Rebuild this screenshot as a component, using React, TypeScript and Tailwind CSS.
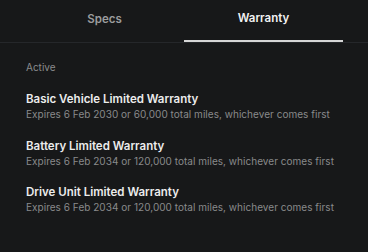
import React from "react";

const items = [
  { title: "Basic Vehicle Limited Warranty", sub: "Expires 6 Feb 2030 or 60,000 total miles, whichever comes first" },
  { title: "Battery Limited Warranty", sub: "Expires 6 Feb 2034 or 120,000 total miles, whichever comes first" },
  { title: "Drive Unit Limited Warranty", sub: "Expires 6 Feb 2034 or 120,000 total miles, whichever comes first" },
];

export default function App() {
  return (
    <div className="w-[368px] h-[252px] bg-[#171819] overflow-hidden" style={{ fontFamily: "Inter, 'Noto Sans', sans-serif" }}>
      <div className="border-b border-[#25272a]">
        <div className="flex px-[25px]">
          <div className="flex-1 h-[42px] pb-[2px] flex items-center justify-center text-[11.5px] text-[#9b9c9d] font-semibold">Specs</div>
          <div className="flex-1 h-[42px] pb-[2px] flex items-center justify-center text-[11.5px] text-[#f2f2f2] font-semibold border-b-2 border-[#d6d6d6] -mb-px">Warranty</div>
        </div>
      </div>
      <div className="px-[26px] pt-[17px]">
        <div className="text-[10px] text-[#8a8b8c] leading-[14px]">Active</div>
        <div className="mt-[17px] flex flex-col gap-[16.5px]">
          {items.map((it) => (
            <div key={it.title}>
              <div className="text-[11.5px] font-semibold text-[#ececec] leading-[16px]">{it.title}</div>
              <div className="text-[10px] text-[#898a8b] leading-[14px] whitespace-nowrap tracking-[0.03px]">{it.sub}</div>
            </div>
          ))}
        </div>
      </div>
    </div>
  );
}
